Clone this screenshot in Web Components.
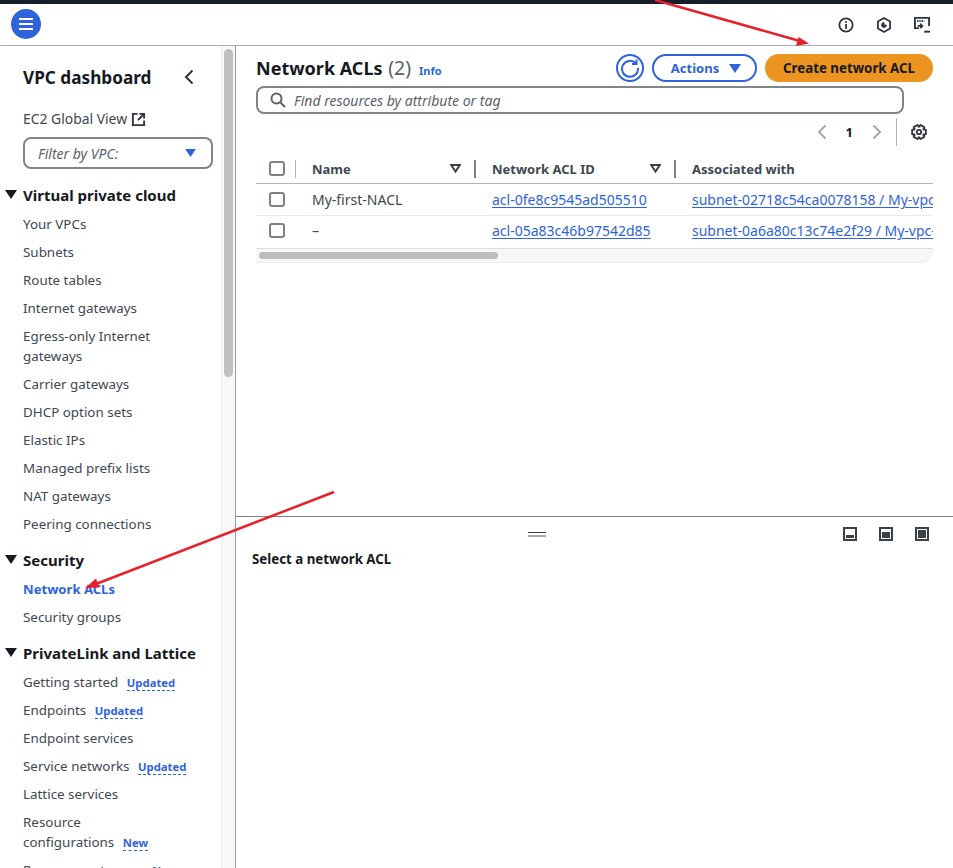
<!DOCTYPE html>
<html lang="en">
<head>
<meta charset="utf-8">
<title>Network ACLs</title>
<style>
html, body { margin: 0; height: 100%; overflow: hidden; background: #fff; }
body { font-family: "Noto Sans", "Open Sans", sans-serif; font-size: 14px; color: #16191f; }
</style>
</head>
<body>
<aws-app></aws-app>

<script>
// six tooth outline for the preferences icon
function gearPath(cx, cy, outer, inner) {
  let d = '';
  for (let i = 0; i < 6; i++) {
    const a = i * Math.PI / 3;
    const pts = [[a - 0.62, inner], [a - 0.3, outer], [a + 0.3, outer], [a + 0.62, inner]];
    pts.forEach((p, n) => {
      const x = (cx + Math.cos(p[0]) * p[1]).toFixed(2);
      const y = (cy + Math.sin(p[0]) * p[1]).toFixed(2);
      d += (i === 0 && n === 0 ? 'M' : 'L') + x + ' ' + y;
    });
  }
  return d + 'z';
}

class AwsTopbar extends HTMLElement {
  constructor() {
    super();
    this.attachShadow({ mode: 'open' }).innerHTML = `
      <style>
        :host { display: flex; align-items: center; justify-content: space-between; height: 42px; margin-top: 3px; padding: 0 23px 0 11px; border-bottom: 1px solid #adadad; background: #fff; }
        .menu { width: 30px; height: 30px; border-radius: 50%; background: #2f63d9; display: flex; align-items: center; justify-content: center; }
        .right { display: flex; gap: 22px; align-items: center; margin-top: 1px; }
        svg { display: block; }
      </style>
      <div class="menu">
        <svg width="16" height="14" viewBox="0 0 16 14"><path d="M1 2h14M1 7h14M1 12h14" stroke="#fff" stroke-width="2"/></svg>
      </div>
      <div class="right">
        <svg width="16" height="16" viewBox="0 0 18 18" fill="none" stroke="#2f3440" stroke-width="2"><circle cx="9" cy="9" r="7.500"/><path d="M9 8v5.500"/><path d="M9 4.400v2"/></svg>
        <svg width="16" height="16" viewBox="0 0 18 18" fill="none" stroke="#2f3440" stroke-width="2"><path d="M9 1.200l6.800 3.900v7.800L9 16.800l-6.800-3.900V5.100z"/><path d="M9 6.200a2.800 2.800 0 1 0 2.800 3.100L9 8.800z" fill="#2f3440" stroke-width="1"/></svg>
        <svg width="16" height="16" viewBox="0 0 18 18" fill="none" stroke="#2f3440" stroke-width="2.200"><path d="M5.500 12.500H1V1h16v9"/><path d="M3.500 4.500h8" stroke-dasharray="1.500 1"/><path d="M4 10h5M7 7.500L9.500 10 7 12.500" stroke-width="1.800"/><path d="M11.500 16.500H18"/></svg>
      </div>`;
  }
}

class NavLink extends HTMLElement {
  constructor() {
    super();
    this.attachShadow({ mode: 'open' }).innerHTML = `
      <style>
        :host { display: block; line-height: 20px; color: #414750; font-size: 13.4px; }
        :host([active]) { color: #2f63d9; font-weight: 700; font-size: 13.100px; }
      </style>
      <slot></slot>`;
  }
}

class NavBadge extends HTMLElement {
  constructor() {
    super();
    this.attachShadow({ mode: 'open' }).innerHTML = `
      <style>
        :host { display: inline-block; margin-left: 5px; color: #2f63d9; font-size: 11.300px; font-weight: 700; line-height: 15px; border-bottom: 1px dashed #2f63d9; }
      </style>
      <slot></slot>`;
  }
}

class NavSection extends HTMLElement {
  constructor() {
    super();
    const title = this.getAttribute('title');
    this.attachShadow({ mode: 'open' }).innerHTML = `
      <style>
        :host { display: block; margin-top: 15px; }
        h3 { position: relative; margin: 0 0 8px; padding-left: 23px; font-size: 15px; font-weight: 700; line-height: 22px; color: #16191f; }
        svg { position: absolute; left: 5px; top: 6px; }
        .links { display: flex; flex-direction: column; gap: 8px; padding-left: 23px; }
      </style>
      <h3><svg width="12" height="9" viewBox="0 0 12 9"><path d="M0 0h12L6 9z" fill="#16191f"/></svg>${title}</h3>
      <div class="links"><slot></slot></div>`;
  }
}

class AwsSidenav extends HTMLElement {
  constructor() {
    super();
    this.attachShadow({ mode: 'open' }).innerHTML = `
      <style>
        :host { display: flex; width: 236px; flex: none; height: 100%; border-right: 1px solid #9a9aa0; box-sizing: border-box; overflow: hidden; }
        .content { width: 221px; flex: none; overflow: hidden; box-sizing: border-box; padding-top: 19px; }
        .head { display: flex; justify-content: space-between; align-items: center; padding: 0 27px 0 23px; height: 24px; font-size: 17.200px; font-weight: 700; color: #16191f; }
        .global { display: flex; align-items: center; gap: 4px; margin: 20px 0 0 23px; color: #414750; line-height: 20px; font-size: 13.900px; }
        .filter { display: flex; justify-content: space-between; align-items: center; box-sizing: border-box; width: 190px; height: 32px; margin: 8px 0 0 23px; padding: 0 15px 0 13px; border: 2px solid #80848b; border-radius: 8px; color: #5b616b; font-style: italic; }
        .bar { flex: 1; background: #f8f8f8; border-left: 1px solid #ececec; padding: 3px 2px 0 2px; }
        .thumb { height: 328px; background: #c1c1c1; border-radius: 5px; }
        .sections { margin-top: 15px; }
        ::slotted(nav-section:first-child) { margin-top: 0; }
      </style>
      <div class="content">
        <div class="head">VPC dashboard
          <svg width="10" height="16" viewBox="0 0 10 16"><path d="M8.500 1.500L2 8l6.500 6.500" fill="none" stroke="#2f3440" stroke-width="2"/></svg>
        </div>
        <div class="global">EC2 Global View
          <svg width="15" height="15" viewBox="0 0 16 16" fill="none" stroke="#2f3440" stroke-width="2"><path d="M7 2H2v12h12V9"/><path d="M9 2h5v5M14 2L7.500 8.500"/></svg>
        </div>
        <div class="filter">Filter by VPC:
          <svg width="11" height="8" viewBox="0 0 12 9"><path d="M0 0h12L6 9z" fill="#2f63d9"/></svg>
        </div>
        <div class="sections"><slot></slot></div>
      </div>
      <div class="bar"><div class="thumb"></div></div>`;
  }
}

class IconButton extends HTMLElement {
  constructor() {
    super();
    this.attachShadow({ mode: 'open' }).innerHTML = `
      <style>
        :host { display: flex; align-items: center; justify-content: center; box-sizing: border-box; height: 28px; border-radius: 14px; font-size: 13px; font-weight: 700; white-space: nowrap; }
        :host([kind=round]) { width: 28px; border: 2px solid #2f63d9; }
        :host([kind=normal]) { width: 105px; border: 2px solid #2f63d9; color: #2f63d9; gap: 10px; padding-left: 3px; }
        :host([kind=primary]) { width: 168px; background: #ec9420; color: #16191f; font-size: 13.300px; }
      </style>
      <slot></slot>`;
  }
}

class HeaderCell extends HTMLElement {
  constructor() {
    super();
    this.attachShadow({ mode: 'open' }).innerHTML = `
      <style>
        :host { display: flex; align-items: center; justify-content: space-between; box-sizing: border-box; height: 28px; padding: 0 14px 0 16px; font-size: 13px; font-weight: 700; color: #414750; white-space: nowrap; }
        svg { flex: none; }
        .end { display: flex; align-items: center; gap: 13px; }
        i { display: block; width: 2px; height: 18px; background: #7d8189; margin-right: -14px; }
      </style>
      <slot></slot>
      <span class="end">
        <svg width="11" height="9" viewBox="0 0 11 9" fill="none" stroke="#3b3f4a" stroke-width="2"><path d="M1.200 1h8.600L5.500 7.500z"/></svg>
        <i></i>
      </span>`;
  }
}

class AwsCheck extends HTMLElement {
  constructor() {
    super();
    this.attachShadow({ mode: 'open' }).innerHTML = `
      <style>
        :host { display: block; box-sizing: border-box; width: 16px; height: 15px; border: 2px solid #7d8189; border-radius: 3px; background: #fff; }
      </style>`;
  }
}

class AclTable extends HTMLElement {
  constructor() {
    super();
    const row = (name, id, assoc, last) => `
      <div class="cell chk ${last}"><aws-check></aws-check></div>
      <div class="cell name ${last}">${name}</div>
      <div class="cell ${last}"><a>${id}</a></div>
      <div class="cell ${last}"><a>${assoc}</a></div>`;
    this.attachShadow({ mode: 'open' }).innerHTML = `
      <style>
        :host { display: block; margin-top: 8px; overflow: hidden; }
        .grid { display: grid; grid-template-columns: 40px 180px 200px 1fr; }
        .head { border-bottom: 1px solid #b4b4bb; height: 29px; display: flex; align-items: center; }
        .chkhead { padding-left: 13px; gap: 10px; }
        .chkhead i { display: block; width: 1px; height: 18px; background: #b4b4bb; }
        .cell { display: flex; align-items: center; height: 32px; box-sizing: border-box; border-bottom: 1px solid #e9ebed; padding-left: 16px; white-space: nowrap; overflow: hidden; color: #414750; min-width: 0; }
        .cell.chk { padding-left: 13px; }
        .cell.tall { height: 33px; padding-bottom: 3px; border-bottom: 1px solid #dcdcdc; }
        a { color: #2f63d9; text-decoration: underline; text-underline-offset: 2px; }
        .scroll { height: 14px; background: #f7f7f7; border-bottom: 1px solid #ececec; border-radius: 0 0 12px 0; padding: 3px 0 0 3px; box-sizing: border-box; }
        .scroll div { width: 239px; height: 7px; border-radius: 4px; background: #bdbdbd; }
        .assoc { padding-left: 16px; font-size: 13px; font-weight: 700; color: #414750; white-space: nowrap; overflow: hidden; }
      </style>
      <div class="grid">
        <div class="head chkhead"><aws-check></aws-check><i></i></div>
        <div class="head"><header-cell style="width:100%">Name</header-cell></div>
        <div class="head"><header-cell style="width:100%">Network ACL ID</header-cell></div>
        <div class="head assoc">Associated with</div>
        ${row('My-first-NACL', 'acl-0fe8c9545ad505510', 'subnet-02718c54ca0078158 / My-vpc-subnet-public1', '')}
        ${row('–', 'acl-05a83c46b97542d85', 'subnet-0a6a80c13c74e2f29 / My-vpc-subnet-private1', 'tall')}
      </div>
      <div class="scroll"><div></div></div>`;
  }
}

class AclHeader extends HTMLElement {
  constructor() {
    super();
    this.attachShadow({ mode: 'open' }).innerHTML = `
      <style>
        :host { display: block; }
        .top { display: flex; align-items: center; height: 28px; }
        h1 { margin: 0; font-size: 18px; line-height: 28px; font-weight: 700; color: #16191f; }
        h1 span { font-weight: 400; color: #5b616b; font-size: 19.500px; margin-left: 1px; }
        .info { margin-left: 8px; margin-top: 4px; color: #2f63d9; font-size: 11px; font-weight: 700; }
        .actions { margin-left: auto; display: flex; gap: 8px; align-items: center; }
        .search { display: flex; align-items: center; gap: 8px; box-sizing: border-box; width: 648px; height: 28px; margin-top: 4px; padding-left: 12px; border: 2px solid #80848b; border-radius: 8px; color: #5b616b; font-style: italic; }
        .pager { display: flex; justify-content: flex-end; align-items: center; height: 28px; margin-top: 4px; padding-right: 6px; color: #16191f; font-size: 13px; font-weight: 700; }
        .pager span { margin: 0 19px; }
        .pager i { display: block; width: 1px; height: 28px; background: #b4b4bb; margin: 0 14px; }
        svg { display: block; flex: none; }
      </style>
      <div class="top">
        <h1>Network ACLs <span>(2)</span></h1>
        <div class="info">Info</div>
        <div class="actions">
          <icon-button kind="round"><svg width="20" height="20" viewBox="0 0 20 20" fill="none" stroke="#2f63d9" stroke-width="2"><path d="M16 5.500A8 8 0 1 0 18 10"/><path d="M16.500 1.500v4.500H12"/></svg></icon-button>
          <icon-button kind="normal">Actions<svg width="12" height="9" viewBox="0 0 12 9"><path d="M0 0h12L6 9z" fill="#2f63d9"/></svg></icon-button>
          <icon-button kind="primary">Create network ACL</icon-button>
        </div>
      </div>
      <div class="search">
        <svg width="16" height="16" viewBox="0 0 16 16" fill="none" stroke="#5b616b" stroke-width="2"><circle cx="6.500" cy="6.500" r="5"/><path d="M10.500 10.500L15 15"/></svg>
        Find resources by attribute or tag
      </div>
      <div class="pager">
        <svg width="10" height="16" viewBox="0 0 10 16"><path d="M8.500 1.500L2 8l6.500 6.500" fill="none" stroke="#a6a8ad" stroke-width="2"/></svg>
        <span>1</span>
        <svg width="10" height="16" viewBox="0 0 10 16"><path d="M1.500 1.500L8 8l-6.500 6.500" fill="none" stroke="#a6a8ad" stroke-width="2"/></svg>
        <i></i>
        <svg width="16" height="16" viewBox="0 0 16 16" fill="none" stroke="#2f3440" stroke-width="1.800" stroke-linejoin="round"><circle cx="8" cy="8" r="2.200"/><path d="${gearPath(8, 8, 7.200, 5.300)}"/></svg>
      </div>`;
  }
}

class SplitPanel extends HTMLElement {
  constructor() {
    super();
    const pos = (y, h) => `<svg width="14" height="14" viewBox="0 0 14 14"><path d="M0 0h14v14H0z" fill="#3b3f4a"/><path d="M2 2h10v10H2z" fill="#fff"/><path d="M3 ${y}h8v${h}H3z" fill="#3b3f4a"/></svg>`;
    this.attachShadow({ mode: 'open' }).innerHTML = `
      <style>
        :host { display: block; height: 352px; box-sizing: border-box; border-top: 1px solid #808080; }
        .top { position: relative; display: flex; justify-content: flex-end; gap: 22px; padding: 10px 24px 0 0; height: 14px; }
        .grip { position: absolute; left: 292px; top: 15px; width: 18px; height: 5px; border-top: 1px solid #3b3f4a; border-bottom: 2px solid #a6a8ad; box-sizing: border-box; }
        svg { display: block; }
        h2 { margin: 8px 0 0 16px; font-size: 13.300px; line-height: 20px; font-weight: 700; color: #16191f; }
      </style>
      <div class="top"><div class="grip"></div>${pos(8, 3)}${pos(5, 6)}${pos(3, 8)}</div>
      <h2>Select a network ACL</h2>`;
  }
}

class AwsApp extends HTMLElement {
  constructor() {
    super();
    this.attachShadow({ mode: 'open' }).innerHTML = `
      <style>
        :host { display: block; position: relative; height: 868px; overflow: hidden; }
        .strip { position: absolute; top: 0; left: 0; right: 0; height: 4px; background: #161e2b; }
        .body { display: flex; height: 822px; }
        .main { flex: 1; min-width: 0; display: flex; flex-direction: column; }
        .list { height: 470px; box-sizing: border-box; padding: 8px 20px 0 20px; }
        .arrows { position: absolute; inset: 0; pointer-events: none; }
      </style>
      <div class="strip"></div>
      <aws-topbar></aws-topbar>
      <div class="body">
        <aws-sidenav>
          <nav-section title="Virtual private cloud">
            <nav-link>Your VPCs</nav-link>
            <nav-link>Subnets</nav-link>
            <nav-link>Route tables</nav-link>
            <nav-link>Internet gateways</nav-link>
            <nav-link>Egress-only Internet<br>gateways</nav-link>
            <nav-link>Carrier gateways</nav-link>
            <nav-link>DHCP option sets</nav-link>
            <nav-link>Elastic IPs</nav-link>
            <nav-link>Managed prefix lists</nav-link>
            <nav-link>NAT gateways</nav-link>
            <nav-link>Peering connections</nav-link>
          </nav-section>
          <nav-section title="Security">
            <nav-link active>Network ACLs</nav-link>
            <nav-link>Security groups</nav-link>
          </nav-section>
          <nav-section title="PrivateLink and Lattice">
            <nav-link>Getting started <nav-badge>Updated</nav-badge></nav-link>
            <nav-link>Endpoints <nav-badge>Updated</nav-badge></nav-link>
            <nav-link>Endpoint services</nav-link>
            <nav-link>Service networks <nav-badge>Updated</nav-badge></nav-link>
            <nav-link>Lattice services</nav-link>
            <nav-link>Resource<br>configurations <nav-badge>New</nav-badge></nav-link>
            <nav-link>Resource gateways <nav-badge>New</nav-badge></nav-link>
          </nav-section>
        </aws-sidenav>
        <div class="main">
          <div class="list">
            <acl-header></acl-header>
            <acl-table></acl-table>
          </div>
          <split-panel></split-panel>
        </div>
      </div>
      <svg class="arrows" width="953" height="868" viewBox="0 0 953 868">
        <path d="M655 0L798 40.500" stroke="#e8202a" stroke-width="2.500" fill="none"/>
        <path d="M809 43.500L796 46l2.500-9z" fill="#e8202a"/>
        <path d="M334 492L96 584" stroke="#e8202a" stroke-width="2.500" fill="none"/>
        <path d="M85 588l11-9.500 3.500 9z" fill="#e8202a"/>
      </svg>`;
  }
}

customElements.define('aws-topbar', AwsTopbar);
customElements.define('nav-link', NavLink);
customElements.define('nav-badge', NavBadge);
customElements.define('nav-section', NavSection);
customElements.define('aws-sidenav', AwsSidenav);
customElements.define('icon-button', IconButton);
customElements.define('header-cell', HeaderCell);
customElements.define('aws-check', AwsCheck);
customElements.define('acl-table', AclTable);
customElements.define('acl-header', AclHeader);
customElements.define('split-panel', SplitPanel);
customElements.define('aws-app', AwsApp);
</script>
</body>
</html>
